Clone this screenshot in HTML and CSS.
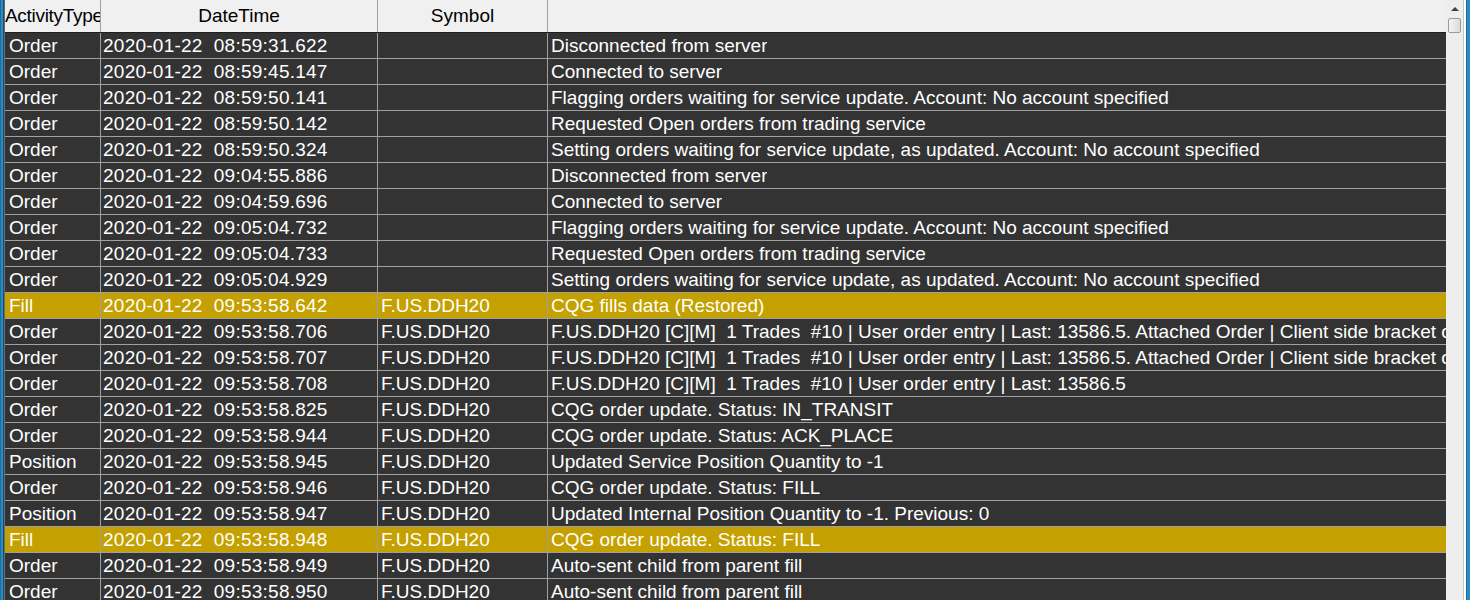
FILE: index.html
```html
<!DOCTYPE html>
<html>
<head>
<meta charset="utf-8">
<link rel="stylesheet" href="styles.css">
</head>
<body>
<div class="window">
  <div class="edge-left"></div>
  <div class="grid">
    <div class="header">
      <div class="hc c1">ActivityType</div>
      <div class="hc c2">DateTime</div>
      <div class="hc c3">Symbol</div>
      <div class="hc c4"></div>
    </div>
    <div class="body">
      <div class="row"><div class="c c1">Order</div><div class="c c2">2020-01-22&nbsp; 08:59:31.622</div><div class="c c3"></div><div class="c c4">Disconnected from server</div></div>
      <div class="row"><div class="c c1">Order</div><div class="c c2">2020-01-22&nbsp; 08:59:45.147</div><div class="c c3"></div><div class="c c4">Connected to server</div></div>
      <div class="row"><div class="c c1">Order</div><div class="c c2">2020-01-22&nbsp; 08:59:50.141</div><div class="c c3"></div><div class="c c4">Flagging orders waiting for service update. Account: No account specified</div></div>
      <div class="row"><div class="c c1">Order</div><div class="c c2">2020-01-22&nbsp; 08:59:50.142</div><div class="c c3"></div><div class="c c4">Requested Open orders from trading service</div></div>
      <div class="row"><div class="c c1">Order</div><div class="c c2">2020-01-22&nbsp; 08:59:50.324</div><div class="c c3"></div><div class="c c4">Setting orders waiting for service update, as updated. Account: No account specified</div></div>
      <div class="row"><div class="c c1">Order</div><div class="c c2">2020-01-22&nbsp; 09:04:55.886</div><div class="c c3"></div><div class="c c4">Disconnected from server</div></div>
      <div class="row"><div class="c c1">Order</div><div class="c c2">2020-01-22&nbsp; 09:04:59.696</div><div class="c c3"></div><div class="c c4">Connected to server</div></div>
      <div class="row"><div class="c c1">Order</div><div class="c c2">2020-01-22&nbsp; 09:05:04.732</div><div class="c c3"></div><div class="c c4">Flagging orders waiting for service update. Account: No account specified</div></div>
      <div class="row"><div class="c c1">Order</div><div class="c c2">2020-01-22&nbsp; 09:05:04.733</div><div class="c c3"></div><div class="c c4">Requested Open orders from trading service</div></div>
      <div class="row"><div class="c c1">Order</div><div class="c c2">2020-01-22&nbsp; 09:05:04.929</div><div class="c c3"></div><div class="c c4">Setting orders waiting for service update, as updated. Account: No account specified</div></div>
      <div class="row fill"><div class="c c1">Fill</div><div class="c c2">2020-01-22&nbsp; 09:53:58.642</div><div class="c c3">F.US.DDH20</div><div class="c c4">CQG fills data (Restored)</div></div>
      <div class="row"><div class="c c1">Order</div><div class="c c2">2020-01-22&nbsp; 09:53:58.706</div><div class="c c3">F.US.DDH20</div><div class="c c4">F.US.DDH20 [C][M]&nbsp; 1 Trades&nbsp; #10 | User order entry | Last: 13586.5. Attached Order | Client side bracket order</div></div>
      <div class="row"><div class="c c1">Order</div><div class="c c2">2020-01-22&nbsp; 09:53:58.707</div><div class="c c3">F.US.DDH20</div><div class="c c4">F.US.DDH20 [C][M]&nbsp; 1 Trades&nbsp; #10 | User order entry | Last: 13586.5. Attached Order | Client side bracket order</div></div>
      <div class="row"><div class="c c1">Order</div><div class="c c2">2020-01-22&nbsp; 09:53:58.708</div><div class="c c3">F.US.DDH20</div><div class="c c4">F.US.DDH20 [C][M]&nbsp; 1 Trades&nbsp; #10 | User order entry | Last: 13586.5</div></div>
      <div class="row"><div class="c c1">Order</div><div class="c c2">2020-01-22&nbsp; 09:53:58.825</div><div class="c c3">F.US.DDH20</div><div class="c c4">CQG order update. Status: IN_TRANSIT</div></div>
      <div class="row"><div class="c c1">Order</div><div class="c c2">2020-01-22&nbsp; 09:53:58.944</div><div class="c c3">F.US.DDH20</div><div class="c c4">CQG order update. Status: ACK_PLACE</div></div>
      <div class="row"><div class="c c1">Position</div><div class="c c2">2020-01-22&nbsp; 09:53:58.945</div><div class="c c3">F.US.DDH20</div><div class="c c4">Updated Service Position Quantity to -1</div></div>
      <div class="row"><div class="c c1">Order</div><div class="c c2">2020-01-22&nbsp; 09:53:58.946</div><div class="c c3">F.US.DDH20</div><div class="c c4">CQG order update. Status: FILL</div></div>
      <div class="row"><div class="c c1">Position</div><div class="c c2">2020-01-22&nbsp; 09:53:58.947</div><div class="c c3">F.US.DDH20</div><div class="c c4">Updated Internal Position Quantity to -1. Previous: 0</div></div>
      <div class="row fill"><div class="c c1">Fill</div><div class="c c2">2020-01-22&nbsp; 09:53:58.948</div><div class="c c3">F.US.DDH20</div><div class="c c4">CQG order update. Status: FILL</div></div>
      <div class="row"><div class="c c1">Order</div><div class="c c2">2020-01-22&nbsp; 09:53:58.949</div><div class="c c3">F.US.DDH20</div><div class="c c4">Auto-sent child from parent fill</div></div>
      <div class="row"><div class="c c1">Order</div><div class="c c2">2020-01-22&nbsp; 09:53:58.950</div><div class="c c3">F.US.DDH20</div><div class="c c4">Auto-sent child from parent fill</div></div>
    </div>
  </div>
  <div class="scrollbar">
    <div class="arrow-up"></div>
    <div class="thumb"></div>
  </div>
  <div class="edge-right"></div>
</div>
</body>
</html>
```

FILE: styles.css
```css
html, body {
  margin: 0;
  padding: 0;
  background: #f0f0f0;
}
body {
  width: 1470px;
  height: 600px;
  overflow: hidden;
  font-family: "Liberation Sans", Arial, sans-serif;
  font-size: 19px;
}
.window {
  display: flex;
  width: 1470px;
  height: 600px;
  overflow: hidden;
}
.edge-left {
  width: 3px;
  flex: none;
  background: #2b8ac0;
  border-right: 1px solid #1a4e6e;
  box-shadow: inset 1px 0 0 #1f6d99;
}
.grid {
  width: 1441px;
  flex: none;
  display: flex;
  flex-direction: column;
  border-left: 1px solid #6a6a6a;
  overflow: hidden;
}
.header {
  display: flex;
  height: 32px;
  flex: none;
  background: #f0f0f0;
  border-bottom: 1px solid #1e1e1e;
  box-sizing: content-box;
}
.hc {
  box-sizing: border-box;
  height: 32px;
  line-height: 32px;
  text-align: center;
  color: #000;
  white-space: nowrap;
  overflow: hidden;
  border-right: 1px solid #a0a0a0;
  flex: none;
}
.c1 { width: 96px; }
.c2 { width: 277px; }
.c3 { width: 170px; }
.c4 { flex: 1; min-width: 0; }
.hc.c4 { border-right: none; }
.hc.c1 { padding-left: 0; text-align: left; letter-spacing: -0.3px; }
.body {
  display: flex;
  flex-direction: column;
}
.row {
  display: flex;
  height: 26px;
  flex: none;
  background: #333333;
  border-bottom: 1px solid #a0a0a0;
  box-sizing: border-box;
  color: #ffffff;
}
.row.fill {
  background: #c4a100;
}
.c {
  box-sizing: border-box;
  height: 25px;
  line-height: 25px;
  white-space: nowrap;
  overflow: hidden;
  border-right: 1px solid #a0a0a0;
  padding-left: 3px;
  flex: none;
}
.c.c1 { padding-left: 4px; }
.c.c2 { padding-left: 2px; letter-spacing: 0.25px; }
.c.c4 { border-right: none; }
.scrollbar {
  width: 17px;
  flex: none;
  background: #eeeeee;
  border-right: 1px solid #c4c4c4;
  display: flex;
  flex-direction: column;
  align-items: center;
}
.arrow-up {
  margin-top: 7px;
  width: 0;
  height: 0;
  border-left: 4px solid transparent;
  border-right: 4px solid transparent;
  border-bottom: 4px solid #404040;
}
.thumb {
  margin-top: 7px;
  width: 13px;
  height: 15px;
  box-sizing: border-box;
  border: 1px solid #9a9a9a;
  border-radius: 2px;
  background: linear-gradient(to right, #f4f4f4, #dcdcdc);
}
.edge-right {
  flex: none;
  width: 7px;
  background: #2b8ac0;
  border-left: 2px solid #ffffff;
  box-sizing: border-box;
  box-shadow: inset 1px 0 0 #1a6a98;
}
```
